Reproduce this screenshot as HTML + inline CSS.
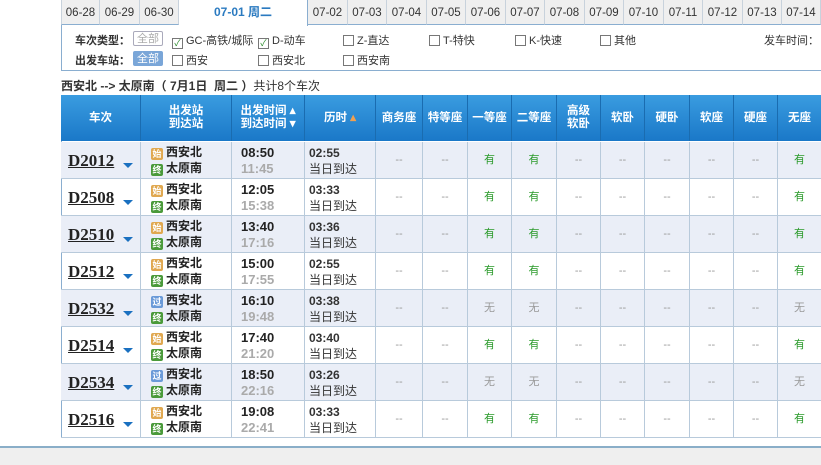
<!DOCTYPE html>
<html><head><meta charset="utf-8"><style>
*{margin:0;padding:0;box-sizing:border-box}
body{width:821px;height:465px;overflow:hidden;background:#fff;font-family:"Liberation Sans","Noto Sans CJK SC",sans-serif;font-size:12px;color:#333;position:relative}
.a{position:absolute;white-space:nowrap}
.tab{position:absolute;top:0;height:25px;background:#efefef;border-right:1px solid #c8d2dc;border-bottom:1px solid #8aaed0;font-size:11.5px;line-height:26px;text-align:center;color:#333}
.fb{position:absolute;left:61px;top:25px;width:770px;height:46px;border:1px solid #8aaed0;border-top:none;}
.f{font-size:11px}
.cb{display:inline-block;width:11px;height:11px;border:1px solid #777;background:#fff;vertical-align:-2px;margin-right:3px;font-size:9px;line-height:9px;color:#2a8a2a;text-align:center}
.btn{display:inline-block;padding:0 3px;height:15px;line-height:14px;border:1px solid #aab;color:#aaa;border-radius:2px}
.head{position:absolute;left:61px;top:95px;width:770px;height:46px;background:linear-gradient(#3a9ce0,#1a78c8);color:#fff;font-weight:bold;font-size:11.5px}
.hc{position:absolute;top:0;height:46px;display:flex;align-items:center;justify-content:center;text-align:center;line-height:13px;border-right:1px solid #1a6cb0}
.row{position:absolute;left:61px;width:770px;height:37px;border-bottom:1px solid #b8cadb}
.g{background:#eaeef7}
.c{position:absolute;top:0;height:37px;border-right:1px solid #b8cadb;text-align:center;line-height:37px;color:#999;font-size:11px}
.y{color:#2a9a2a}
.tn{position:absolute;left:7px;top:9px;font:bold 17px "Liberation Serif",serif;color:#222;text-decoration:underline}
.ar{position:absolute;left:62px;top:21px;width:0;height:0;border-left:5px solid transparent;border-right:5px solid transparent;border-top:5px solid #1a70c0}
.st{position:absolute;left:90px;font-weight:bold;font-size:12px;color:#222;line-height:15px}
.bd{display:inline-block;width:12px;height:12px;border-radius:2px;font-size:9px;line-height:12px;color:#fff;text-align:center;margin-right:3px;vertical-align:-1px}
.tm{position:absolute;left:180px;font:bold 13px "Liberation Sans",sans-serif;line-height:16px}
.du{position:absolute;left:248px;font-size:12px;line-height:16px;color:#333}
</style></head><body>
<div class="tab" style="left:61px;width:39px;border-left:1px solid #c8d2dc">06-28</div>
<div class="tab" style="left:100px;width:40px">06-29</div>
<div class="tab" style="left:140px;width:39px">06-30</div>
<div class="a" style="left:179px;top:0;width:129px;height:26px;background:#fff;border-right:1px solid #8aaed0;color:#2a7ac0;font-weight:bold;font-size:12px;line-height:24px;text-align:center">07-01 周二</div>
<div class="tab" style="left:308px;width:40px">07-02</div>
<div class="tab" style="left:348px;width:39px">07-03</div>
<div class="tab" style="left:387px;width:40px">07-04</div>
<div class="tab" style="left:427px;width:39px">07-05</div>
<div class="tab" style="left:466px;width:40px">07-06</div>
<div class="tab" style="left:506px;width:39px">07-07</div>
<div class="tab" style="left:545px;width:40px">07-08</div>
<div class="tab" style="left:585px;width:39px">07-09</div>
<div class="tab" style="left:624px;width:40px">07-10</div>
<div class="tab" style="left:664px;width:39px">07-11</div>
<div class="tab" style="left:703px;width:40px">07-12</div>
<div class="tab" style="left:743px;width:39px">07-13</div>
<div class="tab" style="left:782px;width:39px">07-14</div>
<div class="fb"></div>
<div class="a f" style="left:75px;top:32px;font-weight:bold">车次类型：</div>
<div class="a f" style="left:133px;top:31px"><span class="btn">全部</span></div>
<div class="a f" style="left:172px;top:32px"><span class="cb">✓</span>GC-高铁/城际</div>
<div class="a f" style="left:258px;top:32px"><span class="cb">✓</span>D-动车</div>
<div class="a f" style="left:343px;top:32px"><span class="cb"></span>Z-直达</div>
<div class="a f" style="left:429px;top:32px"><span class="cb"></span>T-特快</div>
<div class="a f" style="left:515px;top:32px"><span class="cb"></span>K-快速</div>
<div class="a f" style="left:600px;top:32px"><span class="cb"></span>其他</div>
<div class="a f" style="left:764px;top:32px">发车时间：</div>
<div class="a f" style="left:75px;top:52px;font-weight:bold">出发车站：</div>
<div class="a f" style="left:133px;top:51px"><span class="btn" style="background:#7aa6d8;color:#fff;border-color:#7aa6d8">全部</span></div>
<div class="a f" style="left:172px;top:52px"><span class="cb"></span>西安</div>
<div class="a f" style="left:258px;top:52px"><span class="cb"></span>西安北</div>
<div class="a f" style="left:343px;top:52px"><span class="cb"></span>西安南</div>
<div class="a" style="left:61px;top:77px;font-size:12px"><b>西安北 --&gt; 太原南（ 7月1日&nbsp; 周二 ）</b>共计8个车次</div>
<div class="head">
<div class="hc" style="left:0;width:80px">车次</div>
<div class="hc" style="left:80px;width:91px">出发站<br>到达站</div>
<div class="hc" style="left:171px;width:73px">出发时间 ▴<br>到达时间 ▾</div>
<div class="hc" style="left:244px;width:71px">历时 <span style="color:#f0a050">&nbsp;▴</span></div>
<div class="hc" style="left:315px;width:47px">商务座</div>
<div class="hc" style="left:362px;width:45px">特等座</div>
<div class="hc" style="left:407px;width:44px">一等座</div>
<div class="hc" style="left:451px;width:45px">二等座</div>
<div class="hc" style="left:496px;width:44px">高级<br>软卧</div>
<div class="hc" style="left:540px;width:44px">软卧</div>
<div class="hc" style="left:584px;width:45px">硬卧</div>
<div class="hc" style="left:629px;width:44px">软座</div>
<div class="hc" style="left:673px;width:44px">硬座</div>
<div class="hc" style="left:717px;width:44px">无座</div>
</div>
<div class="a" style="left:61px;top:141px;width:1px;height:297px;background:#8aaed0"></div>
<div class="a" style="left:61px;top:437px;width:770px;height:1px;background:#8aaed0"></div>
<div class="a" style="left:0;top:446px;width:821px;height:2px;background:#8aaec8"></div>
<div class="a" style="left:0;top:448px;width:821px;height:17px;background:#efefef"></div>

<div id="rows"></div>
<script>
var d=[["D2012","08:50","11:45","02:55",1,1],["D2508","12:05","15:38","03:33",1,0],["D2510","13:40","17:16","03:36",1,1],["D2512","15:00","17:55","02:55",1,0],["D2532","16:10","19:48","03:38",0,1],["D2514","17:40","21:20","03:40",1,0],["D2534","18:50","22:16","03:26",0,1],["D2516","19:08","22:41","03:33",1,0]];
var cols=[[0,80],[80,91],[171,73],[244,71],[315,47],[362,45],[407,44],[451,45],[496,44],[540,44],[584,45],[629,44],[673,44],[717,44]];
var h="";
d.forEach(function(r,i){
var top=142+i*37;
h+='<div class="row'+(r[5]?' g':'')+'" style="top:'+top+'px">';
cols.forEach(function(c,j){
var t="";
if(j>=4){if(j==6||j==7||j==13)t=r[4]?'<span class="y">有</span>':'无';else t='--';}
h+='<div class="c" style="left:'+c[0]+'px;width:'+c[1]+'px">'+t+'</div>';});
h+='<div class="tn">'+r[0]+'</div><div class="ar"></div>';
h+='<div class="st" style="top:3px"><span class="bd" style="background:'+(r[4]?'#e0a850':'#6a9ad8')+'">'+(r[4]?'始':'过')+'</span>西安北</div>';
h+='<div class="st" style="top:19px"><span class="bd" style="background:#4a9a3a">终</span>太原南</div>';
h+='<div class="tm" style="top:3px;color:#222">'+r[1]+'</div><div class="tm" style="top:19px;color:#aaa">'+r[2]+'</div>';
h+='<div class="du" style="top:3px;font-weight:bold;font-size:12px">'+r[3]+'</div><div class="du" style="top:19px">当日到达</div>';
h+='</div>';});
document.getElementById("rows").innerHTML=h;
</script>
</body></html>
